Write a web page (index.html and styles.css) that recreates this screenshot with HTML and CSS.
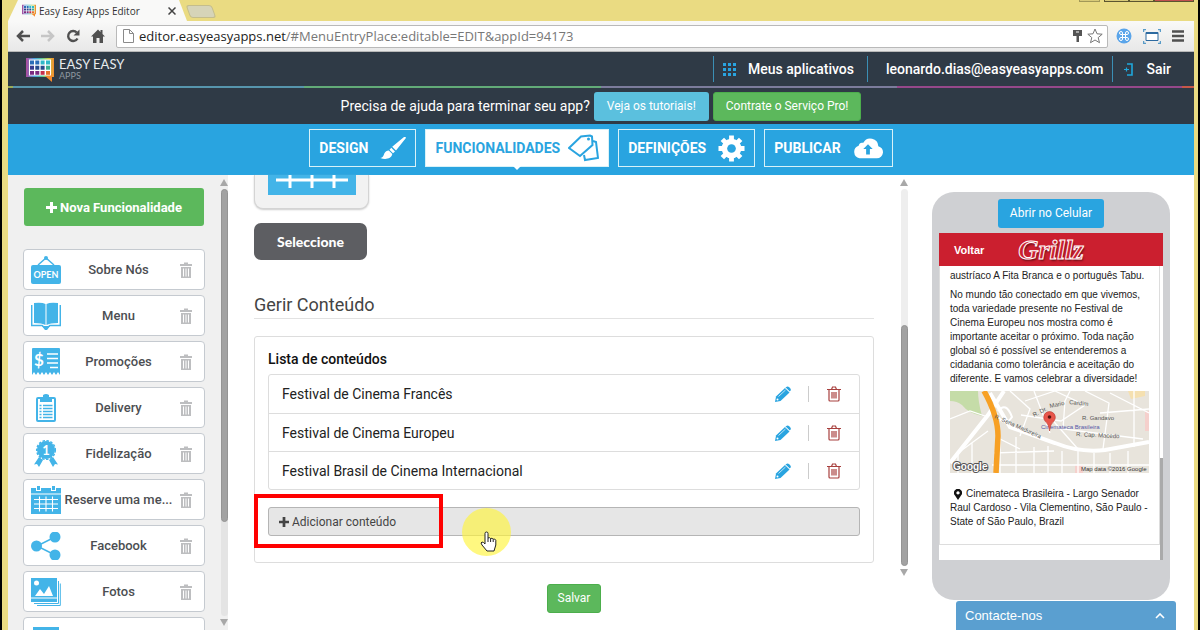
FILE: index.html
```html
<!DOCTYPE html>
<html lang="pt-BR">
<head>
  <meta charset="UTF-8">
  <meta name="viewport" content="width=device-width, initial-scale=1.0">
  <title>Easy Easy Apps Editor</title>
  <link rel="stylesheet" href="styles.css">
</head>
<body>
  <!-- shared icons -->
  <svg class="defs" width="0" height="0" aria-hidden="true">
    <linearGradient id="rainbow" x1="0" y1="0" x2="1" y2="0">
      <stop offset="0" stop-color="#b04a9c"/><stop offset=".3" stop-color="#4a9fe0"/><stop offset=".55" stop-color="#55c8a0"/><stop offset=".8" stop-color="#c8d048"/><stop offset="1" stop-color="#f08a30"/>
    </linearGradient>
    <symbol id="logo" viewBox="0 0 28 25">
      <path d="M0 1h28v19H0z" fill="url(#rainbow)"/>
      <path d="M19 19l7 6V17z" fill="#f58a2c"/>
      <rect x="3" y="2.500" width="22" height="16" fill="#fff"/>
      <path d="M4 3.500h4v4H4zM9.300 3.500h4v4h-4z" fill="#2b6cb8"/><path d="M14.600 3.500h4v4h-4zM20 3.500h4v4h-4z" fill="#2fb8c8"/>
      <path d="M4 8.700h4v4H4z" fill="#3a3c90"/><path d="M9.300 8.700h4v4h-4zM14.600 8.700h4v4h-4z" fill="#274a8c"/><path d="M20 8.700h4v4h-4z" fill="#3cae90"/>
      <path d="M4 14h4v3.800H4zM9.300 14h4v3.800h-4z" fill="#7b2a80"/><path d="M14.600 14h4v3.800h-4z" fill="#c8304c"/><path d="M20 14h4v3.800h-4z" fill="#e8702c"/>
    </symbol>
    <symbol id="bin" viewBox="0 0 12 16">
      <path d="M4 2V.500h4V2h4v2H0V2zM1 5h10v11H1z" fill="#bdbec0"/>
      <path d="M3.500 6.500v8M6 6.500v8M8.500 6.500v8" stroke="#fff" stroke-width="1"/>
    </symbol>
    <symbol id="trash" viewBox="0 0 16 16">
      <path d="M1 3.500h14M5.500 3.500L6.500 1h3l1 2.500M3 3.500V14q0 1 1 1h8q1 0 1-1V3.500M6 6v6.500M8 6v6.500M10 6v6.500" fill="none" stroke="#a8403e" stroke-width="1.200"/>
    </symbol>
    <symbol id="pencil" viewBox="0 0 16 16">
      <path d="M0 16l1-5.500L10 2l4.500 4.500L5.500 15z" fill="#29a4e0"/>
      <path d="M11 1.200q1.500-1.500 3-.200l1.200 1.200q1.300 1.500 0 2.900l-.700.500-4.200-4z" fill="#29a4e0"/>
      <path d="M10.300 1.600l4.500 4.300M3.500 10.500l7-6.500" stroke="#fff" stroke-width=".7"/>
      <circle cx="2.500" cy="13.500" r="1" fill="#fff"/>
    </symbol>
    <symbol id="plus" viewBox="0 0 11 11"><path d="M4 0h3v4h4v3H7v4H4V7H0V4h4z" fill="currentColor"/></symbol>
    <symbol id="calendar" viewBox="0 0 30 28">
      <path d="M0 2h5v3h5V2h10v3h5V2h5v26H0z" fill="#43b4e8"/><path d="M6 0h3v4H6zM21 0h3v4h-3z" fill="#43b4e8"/>
      <path d="M0 8h30" stroke="#fff"/>
      <path d="M3 13.500h24M3 18h24M3 22.500h24M8.500 10.500v15M15 10.500v15M21.500 10.500v15" stroke="#fff" stroke-width="1.100"/>
    </symbol>
  </svg>

  <div class="window">
    <!-- browser chrome -->
    <div class="tabs">
      <div class="tab">
        <svg class="favicon"><use href="#logo"/></svg>
        <span>Easy Easy Apps Editor</span>
        <button class="tab-close" aria-label="Fechar"><svg width="8" height="8" viewBox="0 0 8 8"><path d="M.500.500l7 7m0-7l-7 7" stroke="#444" stroke-width="1.500"/></svg></button>
      </div>
      <button class="new-tab" aria-label="Nova guia"></button>
      <div class="win-buttons"><i></i><i></i><i></i><i></i></div>
    </div>
    <div class="toolbar">
      <button aria-label="Voltar"><svg width="14" height="12" viewBox="0 0 14 12"><path d="M14 6H2M7 1L2 6l5 5" fill="none" stroke="#505050" stroke-width="2.500"/></svg></button>
      <button aria-label="Avançar"><svg width="14" height="12" viewBox="0 0 14 12"><path d="M0 6h12M7 1l5 5-5 5" fill="none" stroke="#c6c6c6" stroke-width="2.500"/></svg></button>
      <button aria-label="Recarregar"><svg width="14" height="14" viewBox="0 0 14 14"><path d="M11.500 9.500A5 5 0 1 1 10.800 3.500" fill="none" stroke="#505050" stroke-width="2.400"/><path d="M13.500.500v6h-6z" fill="#505050"/></svg></button>
      <button aria-label="Início"><svg width="14" height="14" viewBox="0 0 14 14"><path d="M0 7.500L7 .500l2.500 2.500V1h2v4L14 7.500h-2V14H8.500V9h-3v5H2V7.500z" fill="#505050"/></svg></button>
      <div class="omnibox">
        <svg width="11" height="14" viewBox="0 0 11 14"><path d="M.500.500h6l4 4v9H.500zM6.500.500v4h4" fill="#fff" stroke="#8a8a8a"/></svg>
        <span class="url">editor.easyeasyapps.net<span>/#MenuEntryPlace:editable=EDIT&amp;appId=94173</span></span>
        <svg width="9" height="12" viewBox="0 0 9 12"><path d="M0 0h9v6H6v6H3.500V6H0z" fill="#555"/><path d="M3 2h3" stroke="#fff"/></svg>
        <svg width="16" height="16" viewBox="0 0 16 16"><path d="M8 1l2 4.800 5.200.400-4 3.400 1.300 5.100L8 12l-4.500 2.700 1.300-5.100-4-3.400L6 5.800z" fill="#fff" stroke="#777"/></svg>
      </div>
      <button aria-label="Extensão"><svg width="16" height="16" viewBox="0 0 16 16"><circle cx="8" cy="8" r="7.500" fill="#5aa5ea"/><path d="M6.500 6.500h3v3h-3zM6.500 6.500H5A1.500 1.500 0 1 1 6.500 5zM9.500 6.500V5A1.500 1.500 0 1 1 11 6.500zM9.500 9.500H11A1.500 1.500 0 1 1 9.500 11zM6.500 9.500V11A1.500 1.500 0 1 1 5 9.500z" fill="none" stroke="#fff"/></svg></button>
      <button aria-label="Captura"><svg width="18" height="15" viewBox="0 0 18 15"><path d="M3 3.500h12v8H3z" fill="#fff" stroke="#2d6aa0"/><path d="M3 4h12" stroke="#2d6aa0" stroke-width="2"/><path d="M.500 3V.500H3M15 .500h2.500V3M17.500 12v2.500H15M3 14.500H.500V12" fill="none" stroke="#5a9cc8" stroke-width="1.500"/></svg></button>
      <button aria-label="Menu"><svg width="12" height="12" viewBox="0 0 12 12"><path d="M0 1.500h12M0 6h12M0 10.500h12" stroke="#505050" stroke-width="2.400"/></svg></button>
    </div>

    <!-- app header -->
    <header class="app-header">
      <a class="brand" href="#">
        <svg class="brand-logo"><use href="#logo"/></svg>
        <span class="brand-name">EASY EASY<small>APPS</small></span>
      </a>
      <nav class="account">
        <a href="#"><svg width="13" height="13" viewBox="0 0 13 13"><path d="M0 0h3v3H0zM5 0h3v3H5zM10 0h3v3h-3zM0 5h3v3H0zM5 5h3v3H5zM10 5h3v3h-3zM0 10h3v3H0zM5 10h3v3H5zM10 10h3v3h-3z" fill="#29a4e0"/></svg>Meus aplicativos</a>
        <a class="email" href="#">leonardo.dias@easyeasyapps.com</a>
        <a class="exit" href="#"><svg width="9" height="13" viewBox="0 0 9 13"><path d="M3 1h5v11H3" fill="none" stroke="#1fa8dc" stroke-width="1.600"/><path d="M0 6.500h5M2.500 4.500v4" stroke="#1fa8dc" stroke-width="1.200"/></svg>Sair</a>
      </nav>
    </header>
    <div class="rainbow"></div>
    <div class="help">
      <span>Precisa de ajuda para terminar seu app?</span>
      <a class="btn btn-info" href="#">Veja os tutoriais!</a>
      <a class="btn btn-success" href="#">Contrate o Serviço Pro!</a>
    </div>
    <nav class="steps">
      <a href="#">DESIGN
        <svg width="26" height="22" viewBox="0 0 26 22"><path d="M25.500 0q.800.800 0 1.600L16 13.500l-3.800-3.700L24 0q.800-.500 1.500 0z" fill="#fff"/><path d="M11.300 10.800l3.700 3.700-2 1.800-3.500-3.500z" fill="#fff"/><path d="M8.800 13.500l3.500 3.500c-1 5-7 5.800-12 4 2.800-.500 3-2 4-4.500q1.500-3 4.500-3z" fill="#fff"/></svg>
      </a>
      <a class="active" href="#">FUNCIONALIDADES
        <svg width="31" height="28" viewBox="0 0 31 28"><path d="M25 7l3 1 2 16-13 2-1-5" fill="none" stroke="#29a4e0" stroke-width="2"/><path d="M1 14L13 2.500 22 1.500l2 1 .500 8.500L12 22z" fill="#fff" stroke="#29a4e0" stroke-width="2"/><circle cx="20.500" cy="5" r="1.500" fill="#29a4e0"/></svg>
      </a>
      <a href="#">DEFINIÇÕES
        <svg width="27" height="27" viewBox="0 0 28 28"><circle cx="14" cy="14" r="7.200" fill="none" stroke="#fff" stroke-width="6"/><path d="M14 .500v27M.500 14h27M4.500 4.500l19 19M23.500 4.500l-19 19" stroke="#fff" stroke-width="5"/><circle cx="14" cy="14" r="4.500" fill="#29a4e0"/></svg>
      </a>
      <a href="#">PUBLICAR
        <svg width="30" height="22" viewBox="0 0 32 22"><path d="M7 22a7 7 0 0 1-1-13.500Q7 4.500 11 5.500A8.500 8.500 0 0 1 27 9a6.600 6.600 0 0 1-1.500 13z" fill="#fff"/><path d="M16 7l5 5h-3v6h-4v-6h-3z" fill="#29a4e0"/></svg>
      </a>
    </nav>

    <div class="workspace">
      <aside class="sidebar">
        <div class="features">
          <button class="btn-new"><svg width="11" height="11"><use href="#plus"/></svg>Nova Funcionalidade</button>
          <ul>
            <li><svg class="ficon" viewBox="0 0 30 28"><path d="M7 9l8-7 8 7" fill="none" stroke="#43b4e8" stroke-width="1.500"/><circle cx="15" cy="2" r="2" fill="#43b4e8"/><rect x="0" y="9" width="30" height="19" rx="2" fill="#43b4e8"/><text x="15" y="22" class="open-text">OPEN</text></svg><span>Sobre Nós</span><button aria-label="Excluir"><svg class="bin"><use href="#bin"/></svg></button></li>
            <li><svg class="ficon" viewBox="0 0 30 28"><path d="M3 1q8-1 11.500 1v21Q11 21 3 21zM27 1q-8-1-11.500 1v21Q19 21 27 21z" fill="#43b4e8"/><path d="M.700 3v20.500h10.500l3 3h1.600l3-3h10.500V3" fill="none" stroke="#43b4e8" stroke-width="1.500"/><path d="M11 24h8l-3 4h-2z" fill="#43b4e8"/></svg><span>Menu</span><button aria-label="Excluir"><svg class="bin"><use href="#bin"/></svg></button></li>
            <li><svg class="ficon" viewBox="0 0 30 28"><path d="M1 1q0-1 1-1h26q1 0 1 1v26l-2-3-2 3-2-3-2 3-2-3-2 3-2-3-2 3-2-3-2 3-2-3-2 3-2-3-2 3z" fill="#43b4e8"/><text x="8" y="18" class="dollar">$</text><path d="M16 6h11M16 10.500h11M16 15h11M19 19.500h8" stroke="#fff" stroke-width="1.500"/></svg><span>Promoções</span><button aria-label="Excluir"><svg class="bin"><use href="#bin"/></svg></button></li>
            <li><svg class="ficon" viewBox="0 0 30 28"><rect x="6" y="4" width="18" height="23" rx="1" fill="#fff" stroke="#43b4e8" stroke-width="2"/><path d="M9 3h3V1q3-2 6 0v2h3v5H9z" fill="#43b4e8"/><path d="M8.500 11.500h2m1.500 0h9.500M8.500 14.500h2m1.500 0h9.500M8.500 17.500h2m1.500 0h9.500M8.500 20.500h2m1.500 0h9.500M8.500 23.500h2m1.500 0h9.500" stroke="#43b4e8" stroke-width="1.300"/></svg><span>Delivery</span><button aria-label="Excluir"><svg class="bin"><use href="#bin"/></svg></button></li>
            <li><svg class="ficon" viewBox="0 0 30 28"><path d="M8 17l4 3-4 7-2-3-3 .500zM22 17l-4 3 4 7 2-3 3 .500z" fill="#43b4e8"/><circle cx="15" cy="10" r="9" fill="#43b4e8"/><circle cx="15" cy="10" r="9.300" fill="none" stroke="#43b4e8" stroke-width="1.500" stroke-dasharray="2.500 1.500"/><text x="15" y="15" class="one">1</text></svg><span>Fidelização</span><button aria-label="Excluir"><svg class="bin"><use href="#bin"/></svg></button></li>
            <li><svg class="ficon"><use href="#calendar"/></svg><span>Reserve uma me...</span><button aria-label="Excluir"><svg class="bin"><use href="#bin"/></svg></button></li>
            <li><svg class="ficon" viewBox="0 0 30 28"><path d="M24 5L6 14l18 9" fill="none" stroke="#43b4e8" stroke-width="1.500"/><g fill="#43b4e8"><circle cx="24" cy="5" r="5.500"/><circle cx="5.500" cy="14" r="5.500"/><circle cx="24" cy="23" r="5.500"/></g></svg><span>Facebook</span><button aria-label="Excluir"><svg class="bin"><use href="#bin"/></svg></button></li>
            <li><svg class="ficon" viewBox="0 0 30 28"><path d="M0 0h26v24H0z" fill="#43b4e8"/><path d="M27.500 3v22.500H3M29.300 5.500v22H6" fill="none" stroke="#43b4e8"/><path d="M4 18l5-7 4 5 5-8 4 10z" fill="#fff"/><circle cx="5.500" cy="5" r="2.500" fill="#fff"/><path d="M0 20h26" stroke="#fff"/></svg><span>Fotos</span><button aria-label="Excluir"><svg class="bin"><use href="#bin"/></svg></button></li>
            <li><svg class="ficon" viewBox="0 0 30 28"><path d="M2 3h26v24H2z" fill="#43b4e8"/></svg><span></span><button aria-label="Excluir"><svg class="bin"><use href="#bin"/></svg></button></li>
          </ul>
        </div>
        <div class="scroll side-scroll"><i class="up"></i><div class="track"><div class="thumb"></div></div><i class="down"></i></div>
      </aside>

      <main class="editor">
        <div class="editor-body">
          <div class="icon-box"><svg width="88" height="20" viewBox="0 0 88 20"><path d="M0 0h88v20H0z" fill="#43b4e8"/><path d="M8 5h72M22 0v13M44 0v13M66 0v13" stroke="#fff" stroke-width="3"/></svg></div>
          <button class="btn-select">Seleccione</button>
          <h2>Gerir Conteúdo</h2>
          <section class="panel">
            <h3>Lista de conteúdos</h3>
            <ul class="contents">
              <li><span>Festival de Cinema Francês</span><button aria-label="Editar"><svg width="16" height="16"><use href="#pencil"/></svg></button><button class="del" aria-label="Excluir"><svg width="16" height="16"><use href="#trash"/></svg></button></li>
              <li><span>Festival de Cinema Europeu</span><button aria-label="Editar"><svg width="16" height="16"><use href="#pencil"/></svg></button><button class="del" aria-label="Excluir"><svg width="16" height="16"><use href="#trash"/></svg></button></li>
              <li><span>Festival Brasil de Cinema Internacional</span><button aria-label="Editar"><svg width="16" height="16"><use href="#pencil"/></svg></button><button class="del" aria-label="Excluir"><svg width="16" height="16"><use href="#trash"/></svg></button></li>
            </ul>
            <div class="add-wrap">
              <button class="btn-add"><svg width="10" height="10"><use href="#plus"/></svg>Adicionar conteúdo</button>
              <div class="mark"></div>
              <div class="pointer"><svg width="18" height="21" viewBox="0 0 18 21"><path d="M5 12V2.500a1.500 1.500 0 0 1 3 0V7q1.500-1 2.600.500 1.500-.800 2.500.700 2-.700 2.700 1V14l-1.800 6H7L2 14q-2-2.500 0-3 1.500 0 3 2z" fill="#fff" stroke="#222"/><path d="M8 7v4M10.600 7.500V11M13.200 8.500V11" stroke="#222"/></svg></div>
            </div>
          </section>
          <button class="btn btn-success btn-save">Salvar</button>
        </div>
        <div class="scroll main-scroll"><i class="up"></i><div class="track"><div class="thumb"></div></div><i class="down"></i></div>
      </main>

      <aside class="preview">
        <div class="phone">
          <a class="btn btn-open" href="#">Abrir no Celular</a>
          <div class="screen">
            <div class="screen-bar"><a href="#">Voltar</a><span class="grillz">Grillz</span></div>
            <div class="screen-body">
              <div class="card">
                <p>austríaco A Fita Branca e o português Tabu.</p>
                <p>No mundo tão conectado em que vivemos,<br>toda variedade presente no Festival de<br>Cinema Europeu nos mostra como é<br>importante aceitar o próximo. Toda nação<br>global só é possível se entenderemos a<br>cidadania como tolerância e aceitação do<br>diferente. E vamos celebrar a diversidade!</p>
                <svg class="map" viewBox="0 0 199 82">
                  <rect width="199" height="82" fill="#e8e4dc"/>
                  <path d="M0 0h28q0 10 4 25Q18 22 12 14 7 10 0 10z" fill="#c5dca8"/><path d="M178 0h17v5l-14 3z" fill="#f5e0b0"/><path d="M195 20h4v20h-4zM125 74h8v8h-8z" fill="#f5d0cc"/>
                  <g fill="none" stroke="#fff" stroke-width="1.300"><path d="M0 28l20-8 18 6M8 82V62l30-22M22 82V52M50 82V48l20 10M66 82V46M84 82V56M98 82V55M112 82V60M128 82V60M144 82V62M160 82V62M178 82V60M44 62l60-2M42 74h157M60 0l20 18L70 45M75 10l30-10 30 14-24 16-40-6M84 0l16 42M98 24l30 34M115 10l-2 28 80 10M135 0l24 12-6 46M160 2l39 20M150 22l49-4M184 0v56M120 0l-6 12"/></g>
                  <g fill="none" stroke="#fff"><path d="M0 72L38 24 54 0" stroke-width="4"/><path d="M40 2l20 34 45 16q25 10 50 7l44-8" stroke-width="4"/><path d="M48 20q8-10 14 6-8 12-16-4" stroke-width="2"/></g>
                  <path d="M34 0q14 25 14 45L46 82" fill="none" stroke="#f7a024" stroke-width="5.500"/>
                  <g class="map-text"><text transform="translate(44 27) rotate(24)">R. Sena Madureira</text><text transform="translate(84 26) rotate(-27)">R. Dr.</text><text transform="translate(100 17) rotate(-12)">Mario</text><text transform="translate(119 13) rotate(6)">Cardim</text><text x="132" y="29">R. Gandavo</text><text transform="translate(126 45) rotate(3)">R. Cap. Macedo</text><text x="91" y="38" class="poi">Cinemateca Brasileira</text><text x="131" y="80" class="copy">Map data ©2016 Google</text></g>
                  <text x="3" y="79" class="google">Google</text>
                  <path d="M99.500 40Q99 33 95 30a5.800 5.800 0 1 1 9 0q-4 3-4.500 10z" fill="#e8554a" stroke="#b33228" stroke-width=".6"/><circle cx="99.500" cy="26" r="1.800" fill="#5a1410"/>
                </svg>
                <p class="address"><svg width="8" height="11" viewBox="0 0 8 11"><path fill-rule="evenodd" d="M4 11L1 6.500a4 4 0 1 1 6 0zM4 2.300a1.600 1.600 0 1 0 .01 0z" fill="#111"/></svg>Cinemateca Brasileira - Largo Senador<br>Raul Cardoso - Vila Clementino, São Paulo -<br>State of São Paulo, Brazil</p>
              </div>
              <div class="screen-thumb"></div>
            </div>
          </div>
        </div>
      </aside>
    </div>
    <button class="contact">Contacte-nos<svg width="10" height="6" viewBox="0 0 10 6"><path d="M1 5l4-4 4 4" fill="none" stroke="#fff" stroke-width="1.600"/></svg></button>
  </div>
</body>
</html>
```
FILE: styles.css
```css
/* base */
* { margin: 0; padding: 0; box-sizing: border-box; }
body { background: #000; font-family: Roboto, "Liberation Sans", sans-serif; font-size: 14px; color: #333; overflow: hidden; }
a { color: inherit; text-decoration: none; }
button { background: none; border: none; font: inherit; color: inherit; cursor: pointer; }
ul { list-style: none; }
svg { display: block; flex: none; }
.defs { position: absolute; }
.window { position: relative; display: flex; flex-direction: column; height: 100vh; margin: 0 2px; border: solid #eadb82; border-width: 0 4px 0 6px; background: #fff; }

/* browser */
.tabs { display: flex; align-items: flex-end; height: 21px; background: #eadb82; font-family: "Open Sans", sans-serif; font-size: 10px; color: #333; flex: none; }
.tab { display: flex; align-items: center; gap: 3px; width: 179px; height: 21px; padding: 0 9px 0 14px; background: #f9f9f8; clip-path: polygon(0 100%, 10px 0, 171px 0, 100% 100%); }
.favicon { width: 14px; height: 13px; }
.tab-close { margin-left: auto; padding: 2px; }
.new-tab { width: 26px; height: 13px; margin: 0 0 3px 1px; background: #d6d4b8; border: 1px solid #c4bd8c; border-radius: 3px; transform: skewX(20deg); }
.win-buttons { display: flex; align-self: flex-start; margin: 0 0 0 auto; height: 2px; }
.win-buttons i { width: 25px; border: solid #5c5530; border-width: 0 1px 1px; background: #d8ca78; }
.win-buttons i:first-child { width: 21px; margin-right: 4px; border-color: #a29858; }
.win-buttons i:last-child { width: 40px; background: #c05050; }
.toolbar { display: flex; align-items: center; gap: 11px; height: 31px; padding: 0 10px 0 8px; background: linear-gradient(#f9f9f8, #e8e8e8); border-bottom: 1px solid #b8b8b8; flex: none; }
.omnibox { flex: 1; display: flex; align-items: center; gap: 5px; height: 23px; padding: 0 4px 0 6px; margin-right: -3px; background: #fff; border: 1px solid #b9b9b9; border-radius: 2px; }
.url { flex: 1; font-family: "Open Sans", sans-serif; font-size: 13px; color: #222; }
.url span { color: #777; }

/* header */
.app-header { display: flex; justify-content: space-between; align-items: center; height: 34px; padding: 0 0 0 18px; background: #2f3a46; color: #fff; flex: none; }
.brand { display: flex; align-items: center; gap: 5px; font-family: Lato, sans-serif; }
.brand-logo { width: 28px; height: 25px; }
.brand-name { font-size: 13px; line-height: 13px; color: #e8ebee; }
.brand-name small { display: block; font-size: 9px; line-height: 10px; color: #8d969f; }
.account { display: flex; font-weight: 500; }
.account a { display: flex; align-items: center; gap: 12px; height: 26px; padding: 0 13px 0 9px; border-left: 1px solid #3b8fb5; }
.account .email { padding: 0 9px 0 18px; }
.account .exit { padding: 0 23px 0 11px; gap: 13px; }
.rainbow { height: 2px; background: linear-gradient(90deg, #9aaa58 5px, #5795ad 5px 25%, #62ab78 25% 50%, #7c7c9c 50% 75%, #96488a 75% 99%, #c85848 99%); flex: none; }
.help { display: flex; justify-content: center; align-items: center; gap: 4px; height: 36px; background: #2f3a46; color: #fff; flex: none; }
.btn { display: block; padding: 0 11px; border: 1px solid transparent; border-radius: 3px; font-size: 12px; line-height: 27px; text-align: center; color: #fff; }
.help .btn { padding: 0 12px; }
.btn-info { background: #5bc0de; }
.btn-success { background: #5cb85c; border-color: #4cae4c; }
.btn-open { background: #29a4e0; }

/* steps */
.steps { display: flex; justify-content: center; align-items: center; gap: 9px; height: 51px; padding-bottom: 3px; background: #29a4e0; color: #fff; font-weight: 700; flex: none; }
.steps a { position: relative; display: flex; align-items: center; gap: 12px; height: 38px; padding: 0 9px; border: 1px solid #d8f2f8; }
.steps a.active { gap: 8px; background: #fff; color: #29a4e0; }
.steps a.active::after { content: ""; position: absolute; left: 50%; top: 100%; margin-left: -4px; border: 4px solid transparent; border-top-color: #fff; }

/* workspace */
.workspace { flex: 1; display: flex; min-height: 0; }
.sidebar { display: flex; width: 220px; background: #f0f0f0; }
.features { flex: 1; padding: 13px 15px 0; overflow: hidden; }
.btn-new { display: flex; justify-content: center; align-items: center; gap: 3px; width: 180px; height: 38px; margin: 0 auto 23px; background: #5cb85c; border-radius: 3px; color: #fff; font-size: 13px; font-weight: 700; }
.features li { display: flex; align-items: center; height: 41px; margin-bottom: 5px; padding: 0 12px 0 7px; background: #fff; border: 1px solid #c5cad0; border-radius: 4px; font-size: 13px; font-weight: 500; color: #4c4e52; }
.features li span { flex: 1; padding: 0 6px 0 2px; text-align: center; white-space: nowrap; }
.ficon { width: 30px; height: 28px; }
.bin { width: 12px; height: 16px; }
.open-text { fill: #fff; font: 700 9px Lato, sans-serif; text-anchor: middle; }
.dollar { fill: #fff; font: 700 17px Lato, sans-serif; text-anchor: middle; }
.one { fill: #fff; font: 700 13px Lato, sans-serif; text-anchor: middle; }

/* scroll bars */
.scroll { display: flex; flex-direction: column; align-items: center; gap: 3px; width: 8px; padding: 4px 0; }
.track { display: flex; flex-direction: column; flex: 1; width: 7px; background: #e4e4e4; border-radius: 4px; }
.thumb { width: 7px; height: 78%; background: #a2a2a2; border: 1px solid #949494; border-radius: 4px; }
.up, .down { border: 4px solid transparent; }
.up { border-top-width: 0; border-bottom: 7px solid #a8a8a8; }
.down { border-bottom-width: 0; border-top: 7px solid #a8a8a8; }
.main-scroll { padding-bottom: 54px; }
.main-scroll .track { justify-content: flex-end; background: #eee; }
.main-scroll .thumb { height: 64%; }

/* editor */
.editor { flex: 1; display: flex; min-width: 0; padding-left: 26px; }
.editor-body { flex: 1; min-width: 0; padding-right: 6px; }
.icon-box { display: flex; justify-content: center; width: 115px; height: 34px; margin-bottom: 14px; background: #f2f2f2; border: 1px solid #d4d4d4; border-top: none; border-radius: 0 0 9px 9px; box-shadow: 0 1px 2px #ccc; }
.btn-select { display: block; width: 113px; height: 37px; margin-bottom: 33px; background: #5d5e62; border-radius: 7px; color: #fff; font: 900 14px Lato, sans-serif; }
.editor h2 { margin: 0 20px 17px 0; padding-bottom: 1px; border-bottom: 1px solid #e2e2e2; font-size: 18px; line-height: 24px; font-weight: 400; color: #444; }
.panel { margin-right: 20px; margin-bottom: 21px; padding: 12px 13px 13px; border: 1px solid #ddd; border-radius: 3px; }
.panel h3 { margin-bottom: 5px; font-size: 14px; line-height: 20px; font-weight: 500; color: #111; }
.contents { margin-bottom: 17px; border: 1px solid #ddd; border-radius: 3px; }
.contents li { display: flex; align-items: center; height: 38px; padding: 0 17px 0 13px; color: #222; }
.contents li + li { border-top: 1px solid #ddd; }
.contents span { flex: 1; }
.contents .del { margin-left: 17px; padding-left: 17px; border-left: 1px solid #ccc; }
.add-wrap { position: relative; margin-bottom: 13px; }
.btn-add { display: flex; align-items: center; gap: 3px; width: 100%; height: 29px; padding: 0 10px; background: #e6e6e6; border: 1px solid #b5b5b5; border-radius: 3px; font-size: 12px; color: #444; }
.mark { position: absolute; left: -14px; top: -13px; width: 189px; height: 54px; border: 4px solid #f00; }
.pointer { position: absolute; left: 194px; top: 1px; width: 49px; height: 48px; padding: 23px 0 0 18px; background: rgba(255, 245, 60, .65); border-radius: 50%; }
.btn-save { margin: 0 auto; padding: 0 10px; }

/* preview */
.preview { width: 286px; padding: 17px 24px 0; }
.phone { display: flex; flex-direction: column; align-items: center; width: 238px; padding: 7px 7px 40px; background: #cfd0d3; border-radius: 22px; }
.screen { width: 100%; margin-top: 5px; background: #fff; }
.screen-bar { display: flex; align-items: center; height: 33px; padding-left: 15px; gap: 34px; background: #cb1f2f; color: #fff; font: 700 11px "Liberation Sans", sans-serif; }
.grillz { font: italic 700 28px "Liberation Serif", serif; color: #cb1f2f; -webkit-text-stroke: 1px #fff; text-shadow: 1px 2px 2px #70101a; }
.screen-body { display: flex; align-items: flex-end; height: 294px; }
.card { flex: 1; align-self: flex-start; height: 279px; padding: 3px 10px 0; border: 1px solid #ddd; border-top: none; overflow: hidden; font: 10px/14px "Liberation Sans", sans-serif; color: #222; white-space: nowrap; }
.card p { margin-bottom: 5px; }
.map { width: 199px; height: 82px; margin-bottom: 14px; }
.address svg { display: inline-block; margin: 0 4px; vertical-align: middle; }
.screen-thumb { width: 3px; height: 102px; background: #aaa; }
.map-text { font: 6px "Liberation Sans", sans-serif; fill: #555; }
.poi { fill: #5558a8; }
.copy { fill: #333; }
.google { font: 700 10px "Liberation Sans", sans-serif; fill: #fff; stroke: #555; stroke-width: 2px; paint-order: stroke; }

/* contact tab, floats over the page */
.contact { position: absolute; right: 18px; bottom: 0; display: flex; justify-content: space-between; align-items: center; width: 220px; height: 29px; padding: 0 11px 0 9px; background: #5a9fd0; border-radius: 3px 3px 0 0; color: #fff; font: 13px "Liberation Sans", sans-serif; }
```
